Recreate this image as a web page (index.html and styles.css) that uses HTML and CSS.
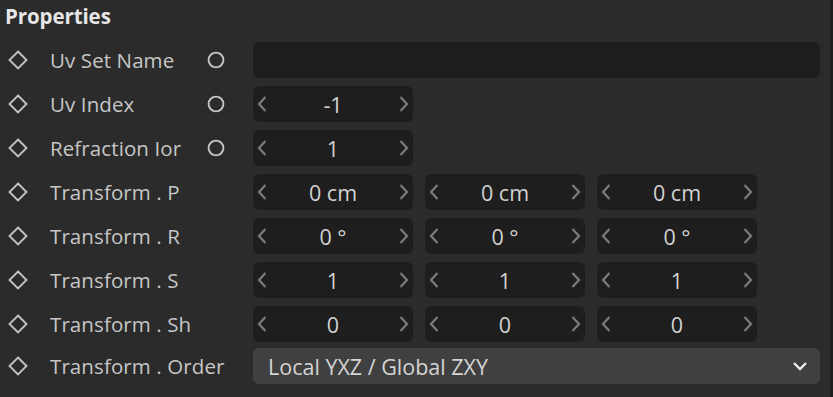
FILE: index.html
```html
<!DOCTYPE html>
<html>
<head>
<meta charset="utf-8">
<link rel="stylesheet" href="styles.css">
</head>
<body>
<div class="panel">
  <div class="title">Properties</div>
  <div class="rows">
    <div class="row">
      <span class="key"><svg width="20" height="20" viewBox="0 0 20 20"><path d="M10 1.5 L18.5 10 L10 18.5 L1.5 10 Z" fill="none" stroke="#c4c4c4" stroke-width="1.9"/></svg></span>
      <span class="label">Uv Set Name</span>
      <span class="anim"><svg width="18" height="18" viewBox="0 0 18 18"><circle cx="9" cy="9" r="7.4" fill="none" stroke="#c4c4c4" stroke-width="1.9"/></svg></span>
      <div class="text-field"></div>
    </div>
    <div class="row">
      <span class="key"><svg width="20" height="20" viewBox="0 0 20 20"><path d="M10 1.5 L18.5 10 L10 18.5 L1.5 10 Z" fill="none" stroke="#c4c4c4" stroke-width="1.9"/></svg></span>
      <span class="label">Uv Index</span>
      <span class="anim"><svg width="18" height="18" viewBox="0 0 18 18"><circle cx="9" cy="9" r="7.4" fill="none" stroke="#c4c4c4" stroke-width="1.9"/></svg></span>
      <div class="fields">
        <div class="num"><svg class="chev" width="10" height="16" viewBox="0 0 10 16"><path d="M8.5 1 L2 8 L8.5 15" fill="none" stroke="#7c7c7c" stroke-width="2.2"/></svg><span class="val">-1</span><svg class="chev" width="10" height="16" viewBox="0 0 10 16"><path d="M1.5 1 L8 8 L1.5 15" fill="none" stroke="#7c7c7c" stroke-width="2.2"/></svg></div>
      </div>
    </div>
    <div class="row">
      <span class="key"><svg width="20" height="20" viewBox="0 0 20 20"><path d="M10 1.5 L18.5 10 L10 18.5 L1.5 10 Z" fill="none" stroke="#c4c4c4" stroke-width="1.9"/></svg></span>
      <span class="label">Refraction Ior</span>
      <span class="anim"><svg width="18" height="18" viewBox="0 0 18 18"><circle cx="9" cy="9" r="7.4" fill="none" stroke="#c4c4c4" stroke-width="1.9"/></svg></span>
      <div class="fields">
        <div class="num"><svg class="chev" width="10" height="16" viewBox="0 0 10 16"><path d="M8.5 1 L2 8 L8.5 15" fill="none" stroke="#7c7c7c" stroke-width="2.2"/></svg><span class="val">1</span><svg class="chev" width="10" height="16" viewBox="0 0 10 16"><path d="M1.5 1 L8 8 L1.5 15" fill="none" stroke="#7c7c7c" stroke-width="2.2"/></svg></div>
      </div>
    </div>
    <div class="row">
      <span class="key"><svg width="20" height="20" viewBox="0 0 20 20"><path d="M10 1.5 L18.5 10 L10 18.5 L1.5 10 Z" fill="none" stroke="#c4c4c4" stroke-width="1.9"/></svg></span>
      <span class="label">Transform . P</span>
      <span class="anim"></span>
      <div class="fields">
        <div class="num"><svg class="chev" width="10" height="16" viewBox="0 0 10 16"><path d="M8.5 1 L2 8 L8.5 15" fill="none" stroke="#7c7c7c" stroke-width="2.2"/></svg><span class="val">0 cm</span><svg class="chev" width="10" height="16" viewBox="0 0 10 16"><path d="M1.5 1 L8 8 L1.5 15" fill="none" stroke="#7c7c7c" stroke-width="2.2"/></svg></div>
        <div class="num"><svg class="chev" width="10" height="16" viewBox="0 0 10 16"><path d="M8.5 1 L2 8 L8.5 15" fill="none" stroke="#7c7c7c" stroke-width="2.2"/></svg><span class="val">0 cm</span><svg class="chev" width="10" height="16" viewBox="0 0 10 16"><path d="M1.5 1 L8 8 L1.5 15" fill="none" stroke="#7c7c7c" stroke-width="2.2"/></svg></div>
        <div class="num"><svg class="chev" width="10" height="16" viewBox="0 0 10 16"><path d="M8.5 1 L2 8 L8.5 15" fill="none" stroke="#7c7c7c" stroke-width="2.2"/></svg><span class="val">0 cm</span><svg class="chev" width="10" height="16" viewBox="0 0 10 16"><path d="M1.5 1 L8 8 L1.5 15" fill="none" stroke="#7c7c7c" stroke-width="2.2"/></svg></div>
      </div>
    </div>
    <div class="row">
      <span class="key"><svg width="20" height="20" viewBox="0 0 20 20"><path d="M10 1.5 L18.5 10 L10 18.5 L1.5 10 Z" fill="none" stroke="#c4c4c4" stroke-width="1.9"/></svg></span>
      <span class="label">Transform . R</span>
      <span class="anim"></span>
      <div class="fields">
        <div class="num"><svg class="chev" width="10" height="16" viewBox="0 0 10 16"><path d="M8.5 1 L2 8 L8.5 15" fill="none" stroke="#7c7c7c" stroke-width="2.2"/></svg><span class="val">0 °</span><svg class="chev" width="10" height="16" viewBox="0 0 10 16"><path d="M1.5 1 L8 8 L1.5 15" fill="none" stroke="#7c7c7c" stroke-width="2.2"/></svg></div>
        <div class="num"><svg class="chev" width="10" height="16" viewBox="0 0 10 16"><path d="M8.5 1 L2 8 L8.5 15" fill="none" stroke="#7c7c7c" stroke-width="2.2"/></svg><span class="val">0 °</span><svg class="chev" width="10" height="16" viewBox="0 0 10 16"><path d="M1.5 1 L8 8 L1.5 15" fill="none" stroke="#7c7c7c" stroke-width="2.2"/></svg></div>
        <div class="num"><svg class="chev" width="10" height="16" viewBox="0 0 10 16"><path d="M8.5 1 L2 8 L8.5 15" fill="none" stroke="#7c7c7c" stroke-width="2.2"/></svg><span class="val">0 °</span><svg class="chev" width="10" height="16" viewBox="0 0 10 16"><path d="M1.5 1 L8 8 L1.5 15" fill="none" stroke="#7c7c7c" stroke-width="2.2"/></svg></div>
      </div>
    </div>
    <div class="row">
      <span class="key"><svg width="20" height="20" viewBox="0 0 20 20"><path d="M10 1.5 L18.5 10 L10 18.5 L1.5 10 Z" fill="none" stroke="#c4c4c4" stroke-width="1.9"/></svg></span>
      <span class="label">Transform . S</span>
      <span class="anim"></span>
      <div class="fields">
        <div class="num"><svg class="chev" width="10" height="16" viewBox="0 0 10 16"><path d="M8.5 1 L2 8 L8.5 15" fill="none" stroke="#7c7c7c" stroke-width="2.2"/></svg><span class="val">1</span><svg class="chev" width="10" height="16" viewBox="0 0 10 16"><path d="M1.5 1 L8 8 L1.5 15" fill="none" stroke="#7c7c7c" stroke-width="2.2"/></svg></div>
        <div class="num"><svg class="chev" width="10" height="16" viewBox="0 0 10 16"><path d="M8.5 1 L2 8 L8.5 15" fill="none" stroke="#7c7c7c" stroke-width="2.2"/></svg><span class="val">1</span><svg class="chev" width="10" height="16" viewBox="0 0 10 16"><path d="M1.5 1 L8 8 L1.5 15" fill="none" stroke="#7c7c7c" stroke-width="2.2"/></svg></div>
        <div class="num"><svg class="chev" width="10" height="16" viewBox="0 0 10 16"><path d="M8.5 1 L2 8 L8.5 15" fill="none" stroke="#7c7c7c" stroke-width="2.2"/></svg><span class="val">1</span><svg class="chev" width="10" height="16" viewBox="0 0 10 16"><path d="M1.5 1 L8 8 L1.5 15" fill="none" stroke="#7c7c7c" stroke-width="2.2"/></svg></div>
      </div>
    </div>
    <div class="row">
      <span class="key"><svg width="20" height="20" viewBox="0 0 20 20"><path d="M10 1.5 L18.5 10 L10 18.5 L1.5 10 Z" fill="none" stroke="#c4c4c4" stroke-width="1.9"/></svg></span>
      <span class="label">Transform . Sh</span>
      <span class="anim"></span>
      <div class="fields">
        <div class="num"><svg class="chev" width="10" height="16" viewBox="0 0 10 16"><path d="M8.5 1 L2 8 L8.5 15" fill="none" stroke="#7c7c7c" stroke-width="2.2"/></svg><span class="val">0</span><svg class="chev" width="10" height="16" viewBox="0 0 10 16"><path d="M1.5 1 L8 8 L1.5 15" fill="none" stroke="#7c7c7c" stroke-width="2.2"/></svg></div>
        <div class="num"><svg class="chev" width="10" height="16" viewBox="0 0 10 16"><path d="M8.5 1 L2 8 L8.5 15" fill="none" stroke="#7c7c7c" stroke-width="2.2"/></svg><span class="val">0</span><svg class="chev" width="10" height="16" viewBox="0 0 10 16"><path d="M1.5 1 L8 8 L1.5 15" fill="none" stroke="#7c7c7c" stroke-width="2.2"/></svg></div>
        <div class="num"><svg class="chev" width="10" height="16" viewBox="0 0 10 16"><path d="M8.5 1 L2 8 L8.5 15" fill="none" stroke="#7c7c7c" stroke-width="2.2"/></svg><span class="val">0</span><svg class="chev" width="10" height="16" viewBox="0 0 10 16"><path d="M1.5 1 L8 8 L1.5 15" fill="none" stroke="#7c7c7c" stroke-width="2.2"/></svg></div>
      </div>
    </div>
    <div class="row row-last">
      <span class="key"><svg width="20" height="20" viewBox="0 0 20 20"><path d="M10 1.5 L18.5 10 L10 18.5 L1.5 10 Z" fill="none" stroke="#c4c4c4" stroke-width="1.9"/></svg></span>
      <span class="label">Transform . Order</span>
      <span class="anim"></span>
      <div class="select"><span>Local YXZ / Global ZXY</span><svg width="16" height="10" viewBox="0 0 16 10"><path d="M2 2 L8 8 L14 2" fill="none" stroke="#f0f0f0" stroke-width="2.3"/></svg></div>
    </div>
  </div>
</div>
</body>
</html>
```

FILE: styles.css
```css
* { box-sizing: border-box; }
html, body {
  margin: 0;
  padding: 0;
  background: #2b2b2b;
}
body {
  width: 833px;
  height: 397px;
  overflow: hidden;
  font-family: "Open Sans", "Noto Sans", sans-serif;
  color: #c8c8c8;
}
.panel {
  height: 397px;
  border-right: 3px solid #1f1f1f;
  padding: 0 10px 0 0;
}
.title {
  font-weight: 700;
  font-size: 20.5px;
  line-height: 24px;
  padding: 4px 0 0 5px;
  height: 42px;
  color: #e6e6e6;
  letter-spacing: -0.1px;
}
.rows {
  display: flex;
  flex-direction: column;
  gap: 8px;
}
.row {
  display: grid;
  grid-template-columns: 50px 150px 53px 1fr;
  align-items: center;
  height: 36px;
}
.row-last {
  margin-top: -2px;
}
.key {
  display: flex;
  padding-left: 8px;
}
.key svg, .anim svg { display: block; }
.label {
  font-size: 20.5px;
  white-space: nowrap;
  color: #c6c6c6;
  letter-spacing: 0.1px;
}
.anim {
  display: flex;
  padding-left: 7px;
}
.text-field {
  height: 36px;
  background: #1e1e1e;
  border-radius: 6px;
}
.fields {
  display: flex;
  gap: 12px;
}
.num {
  width: 160px;
  height: 36px;
  background: #1e1e1e;
  border-radius: 6px;
  display: flex;
  align-items: center;
  justify-content: space-between;
  padding: 0 4px 0 4px;
}
.chev { display: block; }
.val {
  font-size: 21.5px;
  color: #d2d2d2;
}
.select {
  height: 36px;
  background: #404040;
  border-radius: 6px;
  display: flex;
  align-items: center;
  justify-content: space-between;
  padding: 0 12px 0 15px;
  font-size: 21.5px;
  color: #d4d4d4;
}
.select svg { display: block; }
```
